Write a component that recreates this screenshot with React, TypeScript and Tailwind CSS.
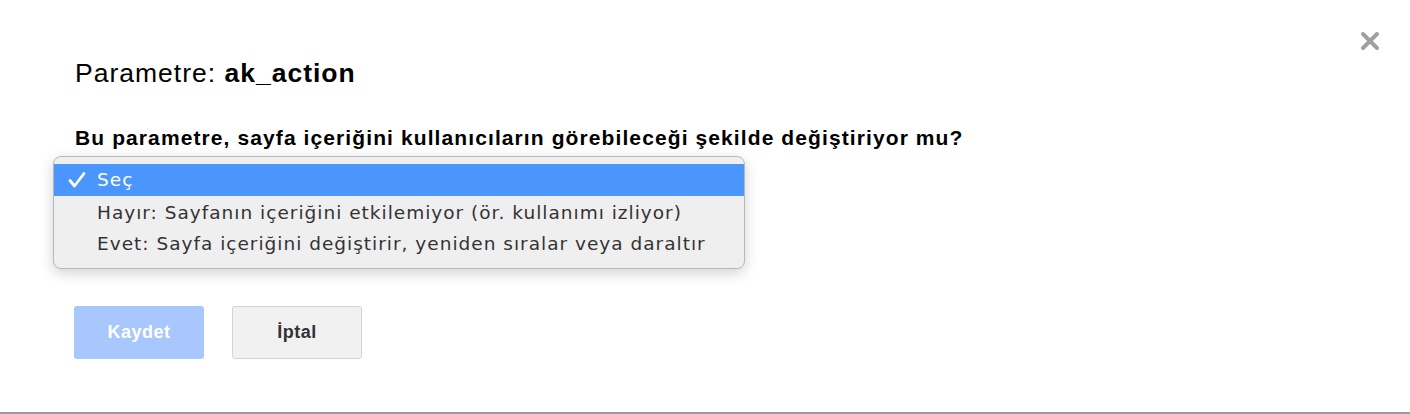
import { useState } from "react";

const options = [
  "Seç",
  "Hayır: Sayfanın içeriğini etkilemiyor (ör. kullanımı izliyor)",
  "Evet: Sayfa içeriğini değiştirir, yeniden sıralar veya daraltır",
];

export default function App() {
  const [selected] = useState(0);

  return (
    <div
      className="relative w-[1410px] h-[414px] bg-white border-b-2 border-[#9a9a9a] overflow-hidden"
      style={{ fontFamily: '"Liberation Sans", Arial, sans-serif' }}
    >
      <button className="absolute right-[29px] top-[30px] w-[22px] h-[22px] flex items-center justify-center">
        <svg width="20" height="20" viewBox="0 0 20 20">
          <path
            d="M3 3 L17 17 M17 3 L3 17"
            stroke="#a0a0a0"
            strokeWidth="4"
            strokeLinecap="round"
          />
        </svg>
      </button>

      <div className="pl-[75px] pt-[56px]">
        <h1 className="text-[26.5px] leading-[34px] tracking-[1px] text-black">
          Parametre: <span className="font-bold">ak_action</span>
        </h1>
        <p className="mt-[36px] text-[21px] leading-[24px] tracking-[1.1px] font-bold text-black whitespace-nowrap">
          Bu parametre, sayfa içeriğini kullanıcıların görebileceği şekilde
          değiştiriyor mu?
        </p>
      </div>

      <div
        className="absolute left-[53px] top-[156px] w-[692px] h-[113px] rounded-[8px] bg-[#efefef] border border-[#b8b8b8] shadow-[0_4px_14px_rgba(0,0,0,0.18)] pt-[7px] overflow-hidden"
        style={{ fontFamily: '"DejaVu Sans", "Noto Sans", sans-serif' }}
      >
        {options.map((opt, i) => (
          <div
            key={opt}
            className={
              i === selected
                ? "h-[32px] flex items-center bg-[#4a96fd] text-white text-[18.5px] tracking-[1px]"
                : "h-[31px] pt-[3px] flex items-center text-[#333] text-[18.5px] tracking-[1px] whitespace-nowrap"
            }
          >
            <span className="w-[43px] shrink-0 flex justify-end pr-[10px]">
              {i === selected && (
                <svg width="20" height="18" viewBox="0 0 20 18">
                  <path
                    d="M3 9.5 L7.5 15 L17 2.5"
                    fill="none"
                    stroke="white"
                    strokeWidth="2.8"
                    strokeLinecap="round"
                    strokeLinejoin="round"
                  />
                </svg>
              )}
            </span>
            <span>{opt}</span>
          </div>
        ))}
      </div>

      <div className="absolute left-[74px] top-[306px] flex gap-[28px]">
        <button className="w-[130px] h-[53px] rounded-[3px] bg-[#a7c7fd] text-white font-bold text-[18px] tracking-[0.5px]">
          Kaydet
        </button>
        <button className="w-[130px] h-[53px] rounded-[3px] bg-[#f1f1f1] border border-[#d4d4d4] text-[#333] font-bold text-[18px] tracking-[0.5px]">
          İptal
        </button>
      </div>
    </div>
  );
}
